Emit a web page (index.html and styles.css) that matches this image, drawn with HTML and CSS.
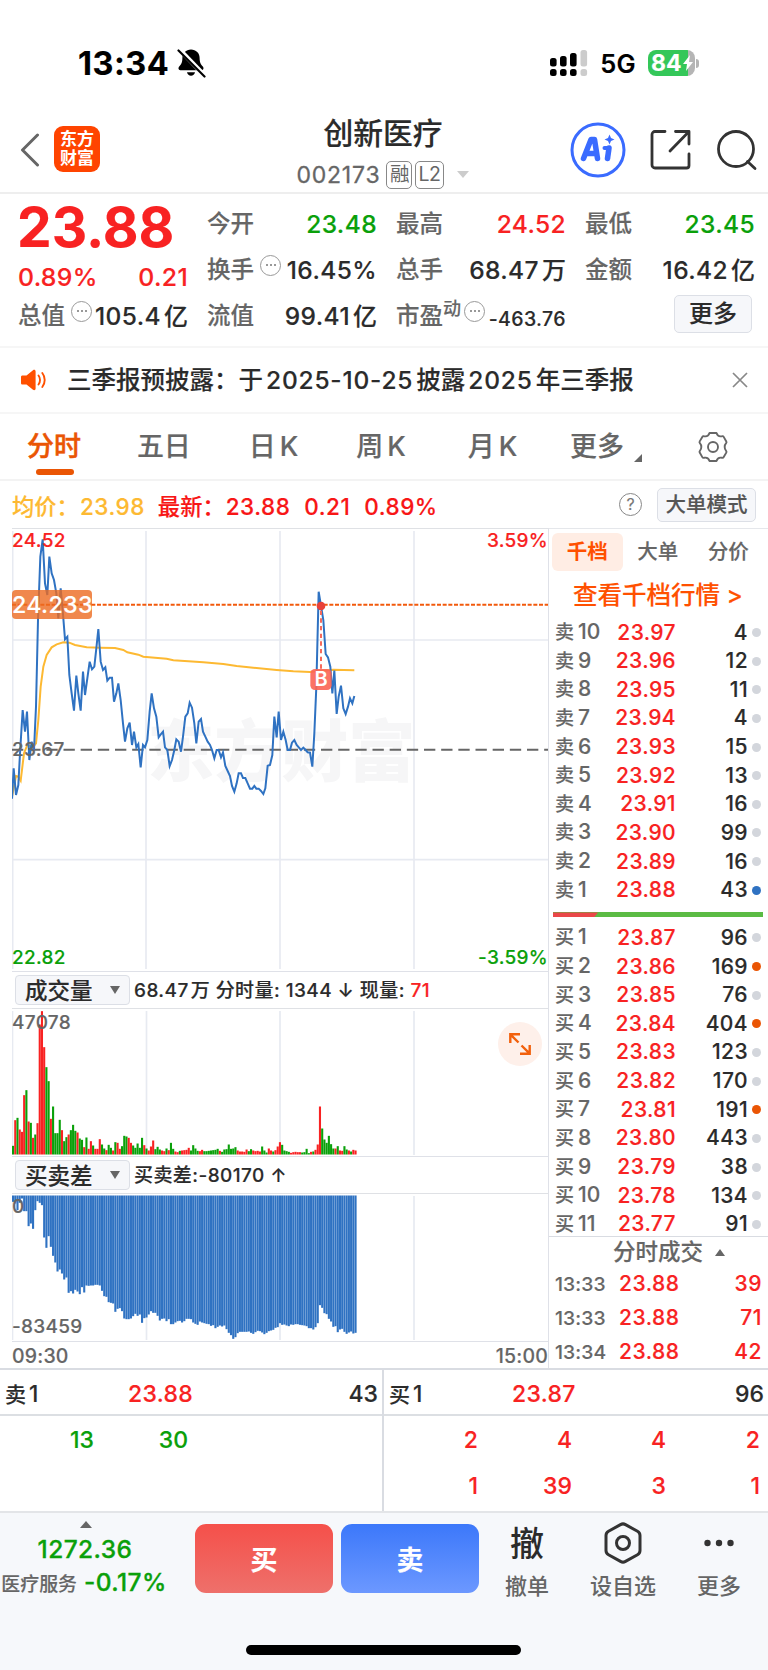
FILE: index.html
```html
<!DOCTYPE html>
<html lang="zh-CN">
<head>
  <meta charset="UTF-8">
  <title>创新医疗 002173</title>
  <link rel="stylesheet" href="styles.css">
</head>
<body>

<div class="statusbar">
  <span class="clock">13:34</span>
  <svg class="bell" width="30" height="30" viewBox="0 0 30 30">
    <path d="M15 1.500c-5 0-8.600 3.600-8.600 8.300 0 5.200-1.400 6.800-3.200 8.700-1.200 1.300-.9 3.700 1.200 3.700h21.200c2.100 0 2.400-2.400 1.200-3.700-1.800-1.900-3.200-3.500-3.200-8.700 0-4.700-3.600-8.300-8.600-8.300z"/>
    <path d="M11 24.300h8c-.5 2.200-2 3.400-4 3.400s-3.500-1.200-4-3.400z"/>
    <path d="M3 1l26 27" stroke="#fff" stroke-width="4.500"/>
    <path d="M2.500 2.500l26 26" stroke="#000" stroke-width="2.200" stroke-linecap="round"/>
  </svg>
  <svg class="signal" width="38" height="28" viewBox="0 0 38 28">
    <rect x="0" y="9" width="6.600" height="8.500" rx="2.500"/>
    <rect x="10" y="7" width="6.600" height="10.500" rx="2.500"/>
    <rect x="20" y="4" width="6.600" height="13.500" rx="2.500"/>
    <rect x="30.500" y="1" width="6.600" height="16.500" rx="2.500" fill="#ccc"/>
    <rect x="0" y="20" width="6.600" height="7" rx="2.500"/>
    <rect x="10" y="20" width="6.600" height="7" rx="2.500"/>
    <rect x="20" y="20" width="6.600" height="7" rx="2.500"/>
    <rect x="30.500" y="20" width="6.600" height="7" rx="2.500" fill="#ccc"/>
  </svg>
  <span class="network">5G</span>
  <div class="battery">84<svg width="12" height="18" viewBox="0 0 12 18"><path d="M8 1L1 10h4l-1 7 7-9H7z" fill="#fff"/></svg></div>
  <i class="battery-tip"></i>
</div>

<div class="header">
  <div class="header-left">
    <svg width="20" height="34" viewBox="0 0 20 34" fill="none" stroke="#666" stroke-width="3" stroke-linejoin="round" stroke-linecap="round"><path d="M17.500 2L2.500 17l15 15"/></svg>
    <div class="logo">东方<br>财富</div>
  </div>
  <div class="header-title">
    <h1>创新医疗</h1>
    <div class="code">002173 <b>融</b><b>L2</b><i></i></div>
  </div>
  <div class="header-right">
    <svg width="56" height="56" viewBox="0 0 56 56">
      <circle cx="28" cy="28" r="26" fill="none" stroke="#3a6bff" stroke-width="3"/>
      <g fill="none" stroke="#3a6bff" stroke-linecap="round" stroke-linejoin="round">
        <path d="M13.500 36.500l7.500-19h3.500l3 19M17 31.500h9" stroke-width="5.500"/>
        <path d="M39 26l-1.500 10.500" stroke-width="5.500"/>
        <path d="M34.500 26h4" stroke-width="4"/>
      </g>
      <path d="M39.500 12.500l1.500 3.500 3.500 1.500-3.500 1.500-1.500 3.500-1.500-3.500-3.500-1.500 3.500-1.500z" fill="#3a6bff"/>
    </svg>
    <svg width="42" height="42" viewBox="0 0 42 42" fill="none" stroke="#333" stroke-width="2.800" stroke-linecap="round" stroke-linejoin="round">
      <path d="M15 2.500H5a3 3 0 0 0-3 3V36a3 3 0 0 0 3 3h31.500a2.500 2.500 0 0 0 2.500-2.500V25M25.500 2.500H39V15M38.500 3L20 22"/>
    </svg>
    <svg width="42" height="42" viewBox="0 0 42 42" fill="none" stroke="#333" stroke-width="2.800" stroke-linecap="round"><circle cx="20" cy="20" r="17.500"/><path d="M31.500 32.500l7.500 7"/></svg>
  </div>
</div>

<div class="quote">
  <div class="quote-price">
    <strong>23.88</strong>
    <div class="change"><span>0.89%</span><span>0.21</span></div>
    <div class="cell"><label>总值</label><i class="tip"></i><span>105.4<em>亿</em></span></div>
  </div>
  <div class="quote-grid">
    <div class="cell"><label>今开</label><span class="green">23.48</span></div>
    <div class="cell"><label>最高</label><span class="red">24.52</span></div>
    <div class="cell"><label>最低</label><span class="green">23.45</span></div>
    <div class="cell"><label>换手</label><i class="tip"></i><span>16.45%</span></div>
    <div class="cell"><label>总手</label><span>68.47<em>万</em></span></div>
    <div class="cell"><label>金额</label><span>16.42<em>亿</em></span></div>
    <div class="cell"><label>流值</label><span>99.41<em>亿</em></span></div>
    <div class="cell"><label>市盈<sup>动</sup></label><i class="tip near"></i><span class="small">-463.76</span></div>
    <div class="cell end"><button class="more">更多</button></div>
  </div>
</div>

<div class="notice">
  <svg width="26" height="22" viewBox="0 0 26 22">
    <path d="M1.500 6.500h4L12 1.200c1.200-.8 2.600-.3 2.600 1.200v17.200c0 1.500-1.400 2-2.600 1.200L5.500 15.500h-4C.6 15.500 0 15 0 14V8c0-1 .6-1.500 1.500-1.500z" fill="#ff5000"/>
    <path d="M17.500 6.500c2 2.500 2 6.500 0 9M21.300 4c3.200 4 3.200 10 0 14" fill="none" stroke="#ff5000" stroke-width="1.900" stroke-linecap="round"/>
  </svg>
  <p>三季报预披露：于<span>2025-10-25</span>披露<span>2025</span>年三季报</p>
  <svg width="16" height="16" viewBox="0 0 16 16" stroke="#888" stroke-width="1.700"><path d="M1 1l14 14M15 1L1 15"/></svg>
</div>

<div class="tabs">
  <span class="active">分时</span>
  <span>五日</span>
  <span>日<u>K</u></span>
  <span>周<u>K</u></span>
  <span>月<u>K</u></span>
  <span class="drop">更多</span>
  <svg width="32" height="32" viewBox="0 0 32 32" fill="none" stroke="#666" stroke-width="1.900" stroke-linejoin="round">
    <path d="M12.500 2h7c.8 2.600 2.800 3.800 5.500 3.200.8-.2 1.300 0 1.700.7l2.600 4.500c.4.700.3 1.200-.2 1.800-1.900 2.100-1.900 5.500 0 7.600.5.600.6 1.100.2 1.800l-2.600 4.500c-.4.700-.9.900-1.700.7-2.700-.6-4.700.6-5.500 3.200h-7c-.8-2.600-2.800-3.800-5.500-3.200-.8.200-1.300 0-1.700-.7l-2.600-4.500c-.4-.7-.3-1.200.2-1.800 1.900-2.100 1.900-5.500 0-7.600-.5-.6-.6-1.100-.2-1.800l2.600-4.500c.4-.7.9-.9 1.700-.7 2.700.6 4.700-.6 5.500-3.200z"/>
    <circle cx="16" cy="16" r="5"/>
  </svg>
</div>

<div class="summary">
  <span class="avg">均价：<b>23.98</b></span>
  <span class="last">最新：<b>23.88</b><b>0.21</b><b>0.89%</b></span>
  <i class="help">?</i>
  <button>大单模式</button>
</div>

<div class="main">
  <div class="charts">
    <div class="chart price-chart">
      <svg width="536" height="442" viewBox="36 27 1608 1326">
        <text x="442" y="768" class="watermark">东方财富</text>
        <path class="grid" d="M38 33V1347M438 33V1347M840 33V1347M1242 33V1347M36 360H1644M36 1019H1644"/>
        <path class="base" d="M36 689H1644"/>
        <path class="limit" d="M36 254H1644"/>
        <polyline class="avg-line" points="36,830 48,768 55,770 62,782 72,700 82,675 100,680 108,670 115,600 122,500 130,440 140,405 155,382 170,373 190,367 208,368 225,375 260,382 300,383 345,384 370,390 382,397 415,404 430,410 500,416 520,421 610,427 670,432 710,438 760,443 830,450 880,454 930,456 1000,449 1063,451"/>
        <polyline class="price-line" points="36,836 41,745 48,825 55,795 60,700 68,570 75,635 81,575 88,720 95,665 102,690 108,560 114,300 121,110 128,58 135,190 142,225 148,110 155,160 162,180 169,220 175,295 182,205 188,270 195,358 202,350 208,465 215,520 222,572 229,467 235,520 242,572 249,455 255,525 262,475 269,425 276,448 283,440 289,385 295,327 302,425 309,450 316,442 322,482 329,473 336,473 342,545 349,520 355,490 362,540 369,610 375,665 382,625 389,608 396,675 402,635 409,682 415,672 422,742 429,675 435,682 442,660 449,575 455,520 462,565 469,590 476,652 483,642 489,635 495,682 502,690 509,738 516,720 523,690 529,658 536,665 543,695 549,650 556,590 563,580 569,548 576,563 583,610 589,670 596,605 603,597 609,635 616,650 623,665 630,675 636,690 643,715 650,690 656,690 663,712 669,697 676,738 683,753 690,768 696,798 703,815 710,790 716,760 723,760 729,774 736,774 743,790 750,806 757,806 763,798 769,806 776,806 783,813 790,822 796,805 803,737 810,735 817,705 823,590 830,652 836,575 843,660 850,635 857,660 863,690 870,690 876,668 883,660 890,675 897,683 903,690 910,683 917,690 923,697 930,698 937,740 943,640 949,500 956,215 963,258 970,300 977,402 984,412 991,440 997,520 1003,452 1010,582 1016,530 1023,497 1030,565 1037,582 1044,560 1050,535 1057,550 1063,528"/>
        <path class="trade-line" d="M963 272V448"/>
        <circle class="trade-dot" cx="963" cy="258" r="13"/>
        <rect class="trade-box" x="931" y="447" width="64" height="63" rx="14"/>
        <text class="trade-text" x="963" y="499">B</text>
      </svg>
      <span class="label top-left red">24.52</span>
      <span class="label top-right red">3.59%</span>
      <span class="label bottom-left green">22.82</span>
      <span class="label bottom-right green">-3.59%</span>
      <span class="label middle">23.67</span>
      <span class="label alert">24.233</span>
    </div>

    <div class="indicator">
      <div class="select">成交量<i></i></div>
      <p>68.47<em>万</em> 分时量: 1344 ↓ 现量: <span class="red">71</span></p>
    </div>
    <div class="chart volume-chart">
      <svg id="volume" width="536" height="147" viewBox="0 0 536 147">
        <path class="grid thin" d="M.5 2V146M134.500 2V146M268 2V146M402 2V146"/>
      </svg>
      <span class="label top-left">47078</span>
      <div class="expand">
        <svg width="24" height="24" viewBox="0 0 24 24" fill="none" stroke="#f2600c" stroke-width="2.400"><path d="M2.300 11V2.300H12M2.300 2.300L10.500 10.500M21.700 13v8.700H12M21.700 21.700L13.500 13.500"/></svg>
      </div>
    </div>

    <div class="indicator second">
      <div class="select">买卖差<i></i></div>
      <p>买卖差:-80170 ↑</p>
    </div>
    <div class="chart diff-chart">
      <svg id="diff" width="536" height="147" viewBox="0 0 536 147">
        <path class="grid thin" d="M.5 2V146M134.500 2V146M268 2V146M402 2V146"/>
      </svg>
      <span class="label top-left">0</span>
      <span class="label bottom-left">-83459</span>
    </div>
    <div class="times"><span>09:30</span><span>15:00</span></div>
  </div>

  <div class="book">
    <div class="book-tabs"><span class="active">千档</span><span>大单</span><span>分价</span></div>
    <div class="book-link">查看千档行情 &gt;</div>
    <ul id="asks" class="levels"></ul>
    <div class="ratio"><i></i></div>
    <ul id="bids" class="levels bids"></ul>
    <div class="deals-title">分时成交<i></i></div>
    <ul class="deals">
      <li><time>13:33</time><span>23.88</span><b>39</b></li>
      <li><time>13:33</time><span>23.88</span><b>71</b></li>
      <li><time>13:34</time><span>23.88</span><b>42</b></li>
    </ul>
  </div>
</div>

<div class="queue">
  <div class="side">
    <div class="side-head"><span>卖<u>1</u></span><span class="red">23.88</span><span>43</span></div>
    <div class="orders green"><span>13</span><span>30</span></div>
  </div>
  <div class="side">
    <div class="side-head"><span>买<u>1</u></span><span class="red">23.87</span><span>96</span></div>
    <div class="orders red">
      <span>2</span><span>4</span><span>4</span><span>2</span>
      <span>1</span><span>39</span><span>3</span><span>1</span>
    </div>
  </div>
</div>

<div class="footer">
  <div class="toolbar">
    <div class="sector">
      <i></i>
      <b>1272.36</b>
      <div><span>医疗服务</span> <b>-0.17%</b></div>
    </div>
    <button class="buy">买</button>
    <button class="sell">卖</button>
    <div class="tool"><span class="glyph">撤</span>撤单</div>
    <div class="tool wide">
      <svg width="40" height="42" viewBox="0 0 40 42" fill="none" stroke="#333" stroke-width="3" stroke-linejoin="round"><path d="M17.500 2.600a5 5 0 0 1 5 0l12 6.600a5 5 0 0 1 2.500 4.300v15a5 5 0 0 1-2.500 4.300l-12 6.600a5 5 0 0 1-5 0l-12-6.600A5 5 0 0 1 3 28.500v-15a5 5 0 0 1 2.500-4.300z"/><circle cx="20" cy="21" r="6.500"/></svg>
      设自选
    </div>
    <div class="tool">
      <svg width="40" height="42" viewBox="0 0 40 42" fill="#333"><circle cx="8.500" cy="21" r="3.200"/><circle cx="20" cy="21" r="3.200"/><circle cx="31.500" cy="21" r="3.200"/></svg>
      更多
    </div>
  </div>
  <div class="home"></div>
</div>

<script src="script.js"></script>
</body>
</html>
```
FILE: styles.css
```css
* {
  box-sizing: border-box;
  margin: 0;
  padding: 0;
}

body {
  width: 768px;
  height: 1670px;
  font-family: Inter, "Noto Sans CJK SC", sans-serif;
  font-weight: 500;
  color: #2b2b2b;
  background: #fff;
  overflow: hidden;
  -webkit-text-stroke: .15px;
}

svg {
  display: block;
  flex: none;
}

i, em, u {
  font-style: normal;
  text-decoration: none;
}

ul {
  list-style: none;
}

button {
  font-family: inherit;
}

.red {
  color: #f82222;
}

.green {
  color: #0aa00a;
}

/* status bar */
.statusbar {
  display: flex;
  align-items: center;
  height: 107px;
  padding: 19px 69px 0 78px;
  color: #000;
}

.clock {
  font-size: 32.500px;
  font-weight: 700;
  letter-spacing: .5px;
}

.bell {
  margin-left: 7px;
}

.signal {
  margin-left: auto;
}

.network {
  margin-left: 12px;
  font-size: 25.500px;
  font-weight: 600;
  letter-spacing: .3px;
}

.battery {
  display: flex;
  align-items: center;
  width: 47px;
  height: 26px;
  margin-left: 12px;
  padding-left: 3px;
  border-radius: 8px;
  background: linear-gradient(90deg, #34c759 86%, #b5b5b5 86%);
  color: #fff;
  font-size: 23px;
  font-weight: 700;
}

.battery-tip {
  width: 3px;
  height: 9px;
  margin-left: 1px;
  border-radius: 0 3px 3px 0;
  background: #b5b5b5;
}

/* header */
.header {
  display: grid;
  grid-template-columns: 250px 1fr 250px;
  height: 87px;
  border-bottom: 2px solid #eee;
}

.header-left {
  display: flex;
  align-items: center;
  padding-left: 20px;
}

.logo {
  width: 46px;
  height: 46px;
  margin: -1px 0 0 14px;
  padding-top: 4px;
  border-radius: 9px;
  background: #ff4400;
  color: #fff;
  font-size: 17px;
  font-weight: 700;
  line-height: 19px;
  text-align: center;
  -webkit-text-stroke: 0;
}

.header-title {
  text-align: center;
}

.header-title h1 {
  margin: 6px 2px 0 0;
  font-size: 29.800px;
  font-weight: 500;
  line-height: 41px;
}

.code {
  display: flex;
  align-items: center;
  justify-content: center;
  height: 29px;
  margin: 6px 3px 0 0;
  font-size: 23px;
  font-weight: 400;
  letter-spacing: .8px;
  color: #666;
  -webkit-text-stroke: .3px;
}

.code b {
  height: 28px;
  min-width: 26px;
  margin-left: 3px;
  padding: 0 2px;
  border: 1.500px solid #888;
  border-radius: 5px;
  font-size: 19.500px;
  font-weight: 400;
  line-height: 25px;
  letter-spacing: -.4px;
  -webkit-text-stroke: 0;
}

.code b:first-of-type {
  margin-left: 6px;
}

.code i {
  margin-left: 13px;
  border: 6.500px solid transparent;
  border-top: 7px solid #ccc;
  border-bottom: 0;
}

.header-right {
  display: flex;
  align-items: center;
  justify-content: flex-end;
  gap: 24px;
  padding-right: 10px;
}

/* quote */
.quote {
  display: flex;
  height: 154px;
  padding: 7px 12px 0 18px;
  border-bottom: 2px solid #f6f6f6;
}

.quote-price {
  width: 170px;
  margin-right: 19px;
  color: #f82222;
}

.quote-price strong {
  display: block;
  margin-left: -1px;
  font-size: 55px;
  font-weight: 700;
  line-height: 53px;
}

.change {
  display: flex;
  justify-content: space-between;
  height: 39px;
  font-size: 24.800px;
  letter-spacing: .3px;
  line-height: 46px;
}

.quote-grid {
  display: grid;
  grid-template-columns: repeat(3, 170px);
  grid-auto-rows: 46px;
  column-gap: 19px;
}

.cell {
  display: flex;
  align-items: center;
  height: 46px;
  font-size: 24.500px;
  line-height: 46px;
  color: #2b2b2b;
}

.cell label {
  display: flex;
  font-size: 23.500px;
  color: #666;
}

.cell sup {
  font-size: 18px;
  line-height: 32px;
}

.cell span {
  margin-left: auto;
  letter-spacing: .4px;
  white-space: nowrap;
}

.cell em {
  margin-left: 3px;
  font-size: 24px;
  letter-spacing: 0;
}

.cell .small {
  font-size: 19.500px;
  padding-top: 5px;
}

.cell .red {
  color: #f82222;
}

.cell .green {
  color: #0aa00a;
}

.cell.end {
  justify-content: flex-end;
}

.tip {
  display: flex;
  flex: none;
  align-items: center;
  justify-content: center;
  width: 21px;
  height: 21px;
  margin: -10px -10px 0 6px;
  border: 1.800px solid #999;
  border-radius: 50%;
}

.tip.near {
  margin-left: 3px;
}

.tip::before {
  content: "";
  width: 2px;
  height: 2px;
  border-radius: 50%;
  background: #777;
  box-shadow: -4px 0 #777, 4px 0 #777;
}

.more,
.summary button {
  border: 1.500px solid #dcdfe6;
  border-radius: 5px;
  background: #f6f7fa;
  font-weight: 500;
}

.more {
  width: 78px;
  height: 38px;
  margin: -4px 3px 0 0;
  font-size: 24px;
  line-height: 32px;
  color: #2b2b2b;
}

/* notice */
.notice {
  display: flex;
  align-items: center;
  height: 66px;
  padding: 0 20px 0 21px;
  border-bottom: 2px solid #f6f6f6;
}

.notice p {
  flex: 1;
  margin-left: 20px;
  font-size: 24.500px;
  line-height: 34px;
}

.notice p span {
  margin: 0 3px;
  letter-spacing: .8px;
}

/* period tabs */
.tabs {
  display: flex;
  justify-content: space-between;
  align-items: center;
  height: 67px;
  padding: 0 39px 0 27px;
  border-bottom: 2px solid #f3f3f3;
  font-size: 27px;
  color: #666;
}

.tabs span {
  position: relative;
  line-height: 40px;
}

.tabs u {
  margin-left: 4px;
}

.tabs .active {
  color: #ea5504;
  -webkit-text-stroke: .5px;
}

.tabs .active::after {
  content: "";
  position: absolute;
  left: 9px;
  bottom: -8px;
  width: 38px;
  height: 6px;
  border-radius: 3px;
  background: #ea5504;
}

.tabs span:nth-child(2) {
  margin-left: -2px;
}

.tabs span:nth-child(5) {
  margin: 0 -5px 0 4px;
}

.tabs .drop {
  margin-right: 15px;
}

.tabs .drop::after {
  content: "";
  position: absolute;
  right: -18px;
  bottom: 5px;
  border-left: 8px solid transparent;
  border-bottom: 8px solid #666;
}

/* summary line */
.summary {
  display: flex;
  align-items: center;
  height: 47px;
  padding: 0 12px;
  font-size: 22.300px;
}

.summary b {
  margin: 0 13px 0 1px;
  font-weight: 500;
  font-size: 22.500px;
  letter-spacing: .5px;
}

.summary .avg {
  color: #fdb932;
}

.summary .last {
  color: #f81616;
}

.help {
  width: 23px;
  height: 23px;
  margin: 0 15px 0 auto;
  border: 1.500px solid #888;
  border-radius: 50%;
  font-size: 16px;
  font-weight: 400;
  line-height: 20px;
  text-align: center;
  color: #777;
}

.summary button {
  width: 99px;
  height: 34px;
  font-size: 20.500px;
  line-height: 28px;
  color: #555;
}

/* charts */
.main {
  display: flex;
  height: 842px;
  border-bottom: 2px solid #d9dce2;
}

.charts {
  width: 549px;
  padding-left: 12px;
  border-right: 1px solid #dfe1e8;
}

.chart {
  position: relative;
  border-top: 1px solid #dfe1e5;
  border-bottom: 1px solid #dfe1e8;
}

.price-chart {
  height: 444px;
}

.volume-chart,
.diff-chart {
  height: 149px;
}

.grid {
  fill: none;
  stroke: #e7eaf1;
  stroke-width: 5;
}

.grid.thin {
  stroke-width: 1.700;
}

.base {
  stroke: #666;
  stroke-width: 6;
  stroke-dasharray: 34 17.500;
}

.limit {
  stroke: #f25a0c;
  stroke-width: 6;
  stroke-dasharray: 12 5;
}

.avg-line,
.price-line {
  fill: none;
  stroke-linejoin: miter;
}

.avg-line {
  stroke: #fdb932;
  stroke-width: 6;
}

.price-line {
  stroke: #2f72c2;
  stroke-width: 6;
}

.trade-line {
  stroke: #f66a5c;
  stroke-width: 6;
  stroke-dasharray: 13 10;
}

.trade-dot {
  fill: #e8413a;
}

.trade-box {
  fill: #fb6454;
  fill-opacity: .9;
}

.trade-text {
  fill: #fff;
  font-size: 60px;
  font-weight: 600;
  text-anchor: middle;
}

.watermark {
  fill: #f6f6f7;
  font-size: 201px;
  font-weight: 900;
}

.label {
  position: absolute;
  font-size: 19px;
  line-height: 24px;
  letter-spacing: .3px;
  color: #666;
}

.label.red {
  color: #f82222;
}

.label.green {
  color: #0aa00a;
}

.top-left {
  top: 0;
  left: 0;
}

.top-right {
  top: 0;
  right: 0;
}

.bottom-left {
  bottom: 1px;
  left: 0;
}

.bottom-right {
  bottom: 1px;
  right: 0;
}

.middle {
  top: 209px;
  left: 0;
}

.label.alert {
  top: 61px;
  left: 0;
  width: 80px;
  border-radius: 4px;
  background: rgba(236, 106, 32, .8);
  color: #fff;
  font-size: 23.300px;
  line-height: 29px;
}

.indicator {
  display: flex;
  align-items: center;
  height: 36px;
  padding-left: 3px;
}

.select {
  display: flex;
  align-items: center;
  justify-content: space-between;
  width: 115px;
  height: 30px;
  margin-right: 4px;
  padding: 0 9px;
  border: 1.500px solid #dcdfe6;
  border-radius: 4px;
  background: #f6f7fa;
  font-size: 22.500px;
  line-height: 27px;
}

.select i {
  border: 5px solid transparent;
  border-top: 8px solid #666;
  border-bottom: 0;
}

.indicator p {
  padding-top: 1px;
  font-size: 19px;
  letter-spacing: .43px;
  line-height: 30px;
}

.indicator em {
  margin-left: 2px;
}

.volume-chart .top-left {
  top: 2px;
}

.diff-chart .top-left {
  top: 1px;
}

.diff-chart .bottom-left {
  bottom: 2px;
}

.expand {
  position: absolute;
  top: 13px;
  right: 6px;
  display: flex;
  align-items: center;
  justify-content: center;
  width: 44px;
  height: 44px;
  border-radius: 50%;
  background: #fef0ea;
}

.times {
  display: flex;
  justify-content: space-between;
  font-size: 19.500px;
  letter-spacing: .2px;
  line-height: 29px;
  color: #666;
}

/* order book */
.book {
  flex: 1;
  border-top: 1px solid #e5e7eb;
}

.book-tabs {
  display: flex;
  height: 42px;
  padding: 4px 0 0 3px;
  font-size: 20.500px;
  line-height: 37px;
  text-align: center;
  color: #666;
}

.book-tabs span {
  width: 70.500px;
}

.book-tabs .active {
  height: 38px;
  border-radius: 6px;
  background: #ffede4;
  font-weight: 700;
  color: #ff5000;
  -webkit-text-stroke: 0;
}

.book-link {
  height: 47px;
  padding-left: 24px;
  font-size: 24.500px;
  line-height: 49px;
  color: #ff5000;
}

.levels li {
  display: grid;
  grid-template-columns: 51px 70px 72px 9px;
  align-items: center;
  height: 28.650px;
  padding-left: 6px;
  font-size: 21px;
  letter-spacing: .4px;
  line-height: 28px;
  text-align: right;
}

.levels label {
  text-align: left;
  font-size: 19px;
  letter-spacing: 0;
  white-space: nowrap;
  color: #666;
}

.levels u {
  margin-left: 4px;
  font-size: 21px;
}

.levels span,
.deals {
  color: #f82222;
}

.levels i {
  width: 9px;
  height: 9px;
  margin-left: 4px;
  border-radius: 50%;
  background: #d3d6dc;
}

.levels .blue {
  background: #2f72c2;
}

.levels .orange {
  background: #ea5504;
}

.ratio {
  height: 5px;
  margin: 8px 5px 6px 4px;
  background: #5bbb44;
}

.ratio i {
  display: block;
  width: 45px;
  height: 5px;
  background: #ea4748;
  clip-path: polygon(0 0, 100% 0, 41px 100%, 0 100%);
}

.bids {
  height: 314px;
  border-bottom: 1px solid #d9dce2;
}

.deals-title {
  display: flex;
  align-items: center;
  height: 30px;
  padding-left: 64px;
  font-size: 22.500px;
  line-height: 30px;
  color: #666;
}

.deals-title i {
  margin-left: 12px;
  border: 5.500px solid transparent;
  border-top: 0;
  border-bottom: 7px solid #666;
}

.deals li {
  display: grid;
  grid-template-columns: 64px 70px 1fr;
  padding: 0 6px;
  font-size: 21px;
  letter-spacing: .5px;
  line-height: 34px;
}

.deals time {
  font-size: 19.300px;
  letter-spacing: .1px;
  color: #666;
}

.deals b {
  font-weight: 500;
  text-align: right;
}

/* queue */
.queue {
  display: grid;
  grid-template-columns: 384px 384px;
  height: 143px;
  border-bottom: 2px solid #e3e5e8;
  font-size: 23px;
}

.side:first-child {
  border-right: 2px solid #d9dce2;
}

.side-head {
  display: grid;
  grid-template-columns: 123px 1fr 100px;
  height: 46px;
  padding: 0 4px 0 5px;
  border-bottom: 2px solid #dcdfe3;
  line-height: 48px;
}

.side-head .red {
  letter-spacing: .3px;
}

.side-head span:first-child {
  font-size: 21px;
}

.side-head u {
  margin-left: 3px;
  font-size: 22.500px;
}

.side-head span:last-child {
  text-align: right;
}

.orders {
  display: grid;
  grid-template-columns: repeat(4, 94px);
  line-height: 46px;
  padding-top: 1px;
  text-align: right;
}

/* footer */
.footer {
  height: 159px;
  background: #f6f8fb;
}

.toolbar {
  display: flex;
  height: 132px;
  padding-top: 11px;
}

.sector {
  display: flex;
  flex-direction: column;
  align-items: center;
  width: 172px;
  margin-right: 23px;
  padding-right: 4px;
  font-size: 18.900px;
  color: #666;
  white-space: nowrap;
}

.sector i {
  margin: -3px 0 5px 4px;
  border: 6.500px solid transparent;
  border-top: 0;
  border-bottom: 7px solid #666;
}

.sector b {
  margin-left: 2px;
  font-size: 24.500px;
  font-weight: 500;
  letter-spacing: .4px;
  line-height: 33px;
  color: #0aa00a;
  -webkit-text-stroke: .3px;
}

.buy,
.sell {
  width: 138px;
  height: 69px;
  border: 0;
  border-radius: 11px;
  color: #fff;
  font-size: 27px;
  font-weight: 700;
}

.buy {
  margin-right: 8px;
  background: linear-gradient(#f5504a, #ee706b);
}

.sell {
  margin-right: 15px;
  background: linear-gradient(#3c78fa, #6c98ff);
}

.tool {
  display: flex;
  flex-direction: column;
  align-items: center;
  width: 66px;
  font-size: 22px;
  line-height: 44px;
  color: #666;
  -webkit-text-stroke: 0;
}

.tool.wide {
  width: 126px;
}

.tool svg {
  margin-top: -2px;
}

.glyph {
  height: 40px;
  font-size: 34px;
  line-height: 39px;
  color: #2b2b2b;
}

.home {
  width: 275px;
  height: 10px;
  margin-left: 246px;
  border-radius: 5px;
  background: #000;
}
```
FILE: script.js
```js
const SVG_NS = 'http://www.w3.org/2000/svg';
const STEP = 536 / 241; // one bar per trading minute

// volume per minute, r = up, g = down
const volume = 'g26 r103 g110 r75 r68 r178 g193 r99 g95 r50 g60 r94 r390 r430 r322 g262 g220 r107 g144 g64 g64 g104 r73 g40 g52 r60 g73 g89 g71 r66 g48 g44 r22 g51 r17 r40 g27 r17 r17 r46 g30 g18 r13 g29 g20 r12 g37 r35 r17 g25 g56 g54 r50 r35 g27 g20 g33 g20 g50 r28 g18 r12 r24 r42 g16 g23 g15 r12 r10 g18 r13 g35 g17 r9 r7 g11 r12 r13 r14 r20 g12 g28 g18 g11 r10 r14 g10 g10 g11 g12 g13 g14 g17 r11 g8 g15 g16 g30 g17 g18 g22 r12 r9 r9 r8 r15 g10 g16 r12 r10 r11 r9 g24 g12 g6 r18 r12 g9 r13 r24 r37 g29 g12 g10 g8 r5 r7 r8 r7 r7 g6 g7 g17 g4 r8 g9 r14 r30 r144 g78 g45 g35 g56 g31 g18 r18 g25 r12 r11 g25 g15 r12 g9 r14 r12'.split(' ');

const diff = [155, 160, 180, 158, 145, 183, 183, 228, 220, 236, 180, 153, 158, 165, 262, 293, 258, 290, 317, 337, 364, 358, 370, 388, 382, 428, 423, 430, 419, 424, 432, 411, 427, 406, 407, 406, 406, 404, 404, 406, 422, 438, 440, 456, 458, 460, 485, 476, 474, 483, 505, 507, 507, 505, 498, 491, 497, 493, 518, 504, 502, 493, 483, 488, 488, 497, 511, 506, 505, 513, 507, 522, 522, 517, 513, 512, 517, 513, 506, 506, 507, 517, 521, 524, 514, 517, 519, 521, 522, 527, 525, 534, 530, 526, 529, 526, 537, 548, 555, 566, 561, 549, 545, 545, 545, 545, 544, 548, 551, 546, 542, 543, 547, 552, 548, 543, 541, 539, 533, 531, 519, 524, 523, 526, 528, 523, 524, 522, 522, 524, 525, 526, 528, 534, 534, 538, 531, 519, 465, 473, 489, 492, 506, 514, 530, 528, 546, 538, 536, 545, 551, 547, 544, 550, 548];

function addBar(svg, i, y, height, color) {
  const rect = document.createElementNS(SVG_NS, 'rect');
  rect.setAttribute('x', i * STEP);
  rect.setAttribute('y', y);
  rect.setAttribute('width', 2.1);
  rect.setAttribute('height', height);
  rect.setAttribute('fill', color);
  svg.appendChild(rect);
}

const volumeSvg = document.getElementById('volume');
volume.forEach((item, i) => {
  const height = item.slice(1) / 3;
  addBar(volumeSvg, i, 145.5 - height, height, item[0] === 'r' ? '#f82222' : '#0aa00a');
});

const diffSvg = document.getElementById('diff');
diff.forEach((value, i) => addBar(diffSvg, i, 1.5, (value - 136) / 3, '#2f72c2'));

// order book rows: name, price, amount, dot color
const asks = [
  [10, '23.97', 4], [9, '23.96', 12], [8, '23.95', 11], [7, '23.94', 4], [6, '23.93', 15],
  [5, '23.92', 13], [4, '23.91', 16], [3, '23.90', 99], [2, '23.89', 16], [1, '23.88', 43, 'blue']
];
const bids = [
  [1, '23.87', 96], [2, '23.86', 169, 'orange'], [3, '23.85', 76], [4, '23.84', 404, 'orange'],
  [5, '23.83', 123], [6, '23.82', 170], [7, '23.81', 191, 'orange'], [8, '23.80', 443],
  [9, '23.79', 38], [10, '23.78', 134], [11, '23.77', 91]
];

function renderLevels(id, name, rows) {
  document.getElementById(id).innerHTML = rows.map(([n, price, amount, dot]) =>
    `<li><label>${name}<u>${n}</u></label><span>${price}</span><div>${amount}</div><i class="${dot || ''}"></i></li>`
  ).join('');
}

renderLevels('asks', '卖', asks);
renderLevels('bids', '买', bids);
```
